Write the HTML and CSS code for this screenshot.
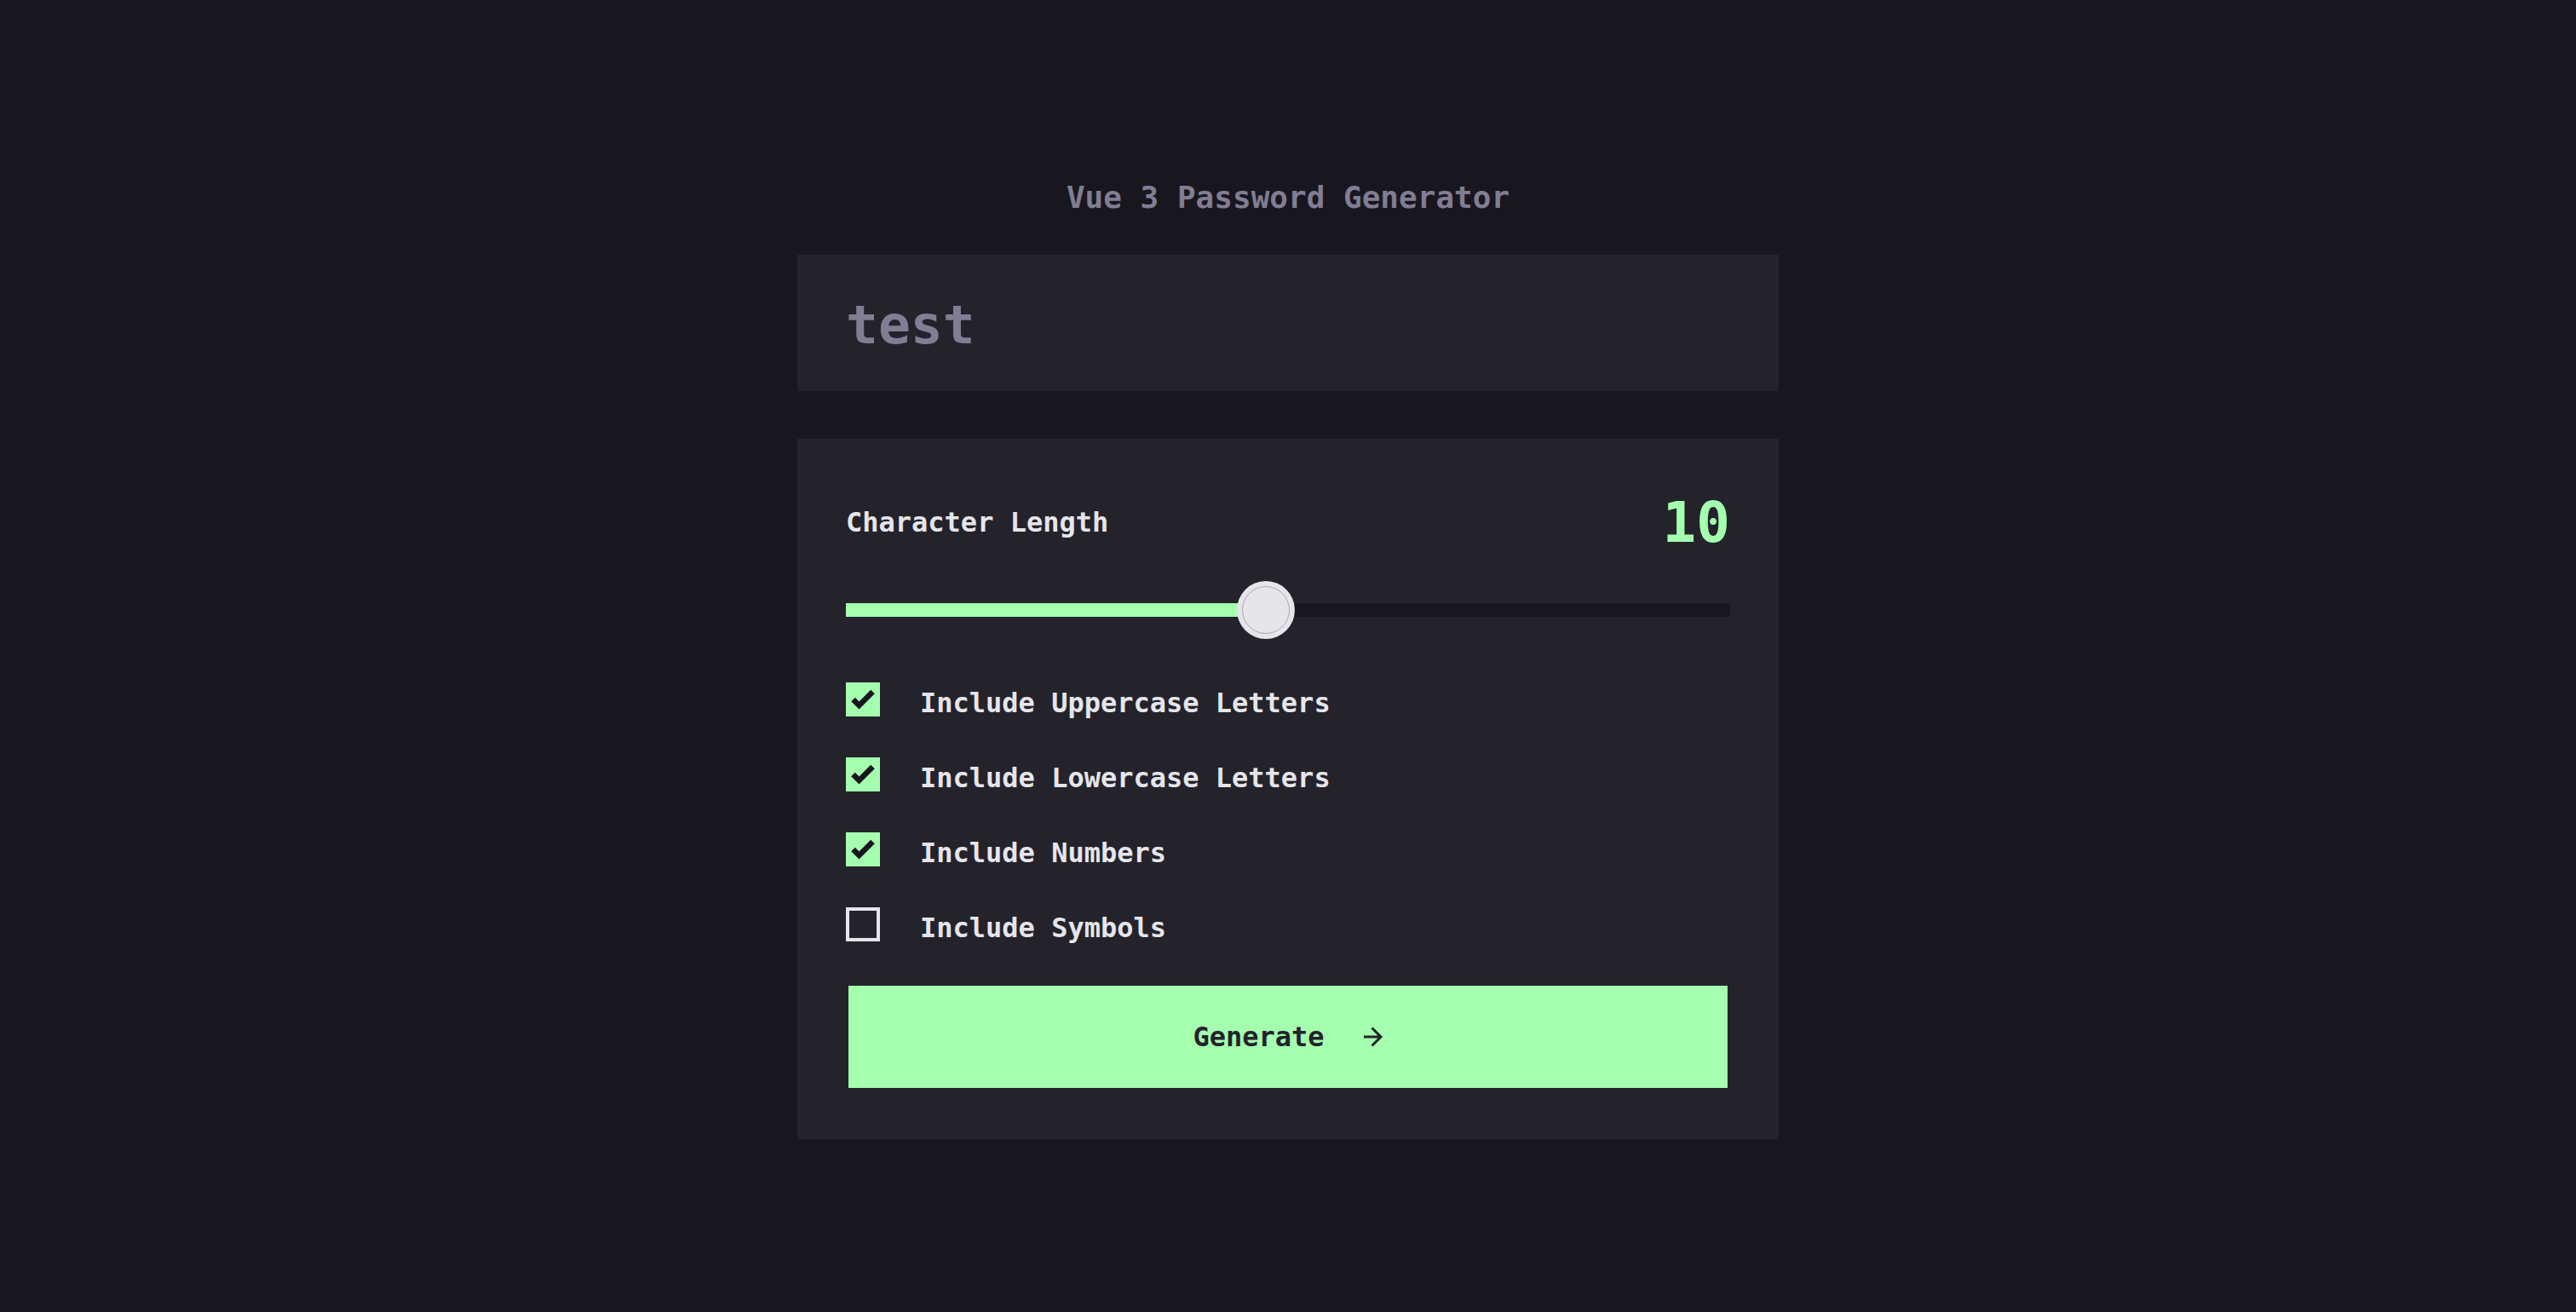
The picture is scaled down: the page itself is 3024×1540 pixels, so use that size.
FILE: index.html
```html
<!DOCTYPE html>
<html lang="en">
<head>
<meta charset="utf-8">
<title>Vue 3 Password Generator</title>
<link rel="stylesheet" href="styles.css">
</head>
<body>
<main class="app">
  <h1 class="title">Vue 3 Password Generator</h1>
  <div class="output">
    <span class="output-text">test</span>
  </div>
  <section class="panel">
    <div class="length-row">
      <span class="length-label">Character Length</span>
      <span class="length-value">10</span>
    </div>
    <div class="slider">
      <div class="slider-track">
        <div class="slider-fill" style="width: 47.54%"></div>
      </div>
      <div class="slider-thumb" style="left: 47.54%"><span class="thumb-ring"></span></div>
    </div>
    <ul class="options">
      <li class="option">
        <span class="box checked">
          <svg viewBox="0 0 40 40" width="40" height="40"><polyline points="8.5,20 15.5,27 31.5,11" fill="none" stroke="#18171F" stroke-width="6.5"/></svg>
        </span>
        <span class="option-label">Include Uppercase Letters</span>
      </li>
      <li class="option">
        <span class="box checked">
          <svg viewBox="0 0 40 40" width="40" height="40"><polyline points="8.5,20 15.5,27 31.5,11" fill="none" stroke="#18171F" stroke-width="6.5"/></svg>
        </span>
        <span class="option-label">Include Lowercase Letters</span>
      </li>
      <li class="option">
        <span class="box checked">
          <svg viewBox="0 0 40 40" width="40" height="40"><polyline points="8.5,20 15.5,27 31.5,11" fill="none" stroke="#18171F" stroke-width="6.5"/></svg>
        </span>
        <span class="option-label">Include Numbers</span>
      </li>
      <li class="option">
        <span class="box"></span>
        <span class="option-label">Include Symbols</span>
      </li>
    </ul>
    <button class="generate" type="button">
      <span>Generate</span>
      <svg class="arrow" viewBox="0 0 24 24" width="24" height="24"><path d="M1 12 H21.5 M10.5 1.5 L21 12 L10.5 22.5" fill="none" stroke="#24232C" stroke-width="3"/></svg>
    </button>
  </section>
</main>
</body>
</html>
```
FILE: styles.css
```css
* {
  box-sizing: border-box;
}

html, body {
  margin: 0;
  padding: 0;
}

body {
  background: #18171F;
  font-family: "DejaVu Sans Mono", "Liberation Mono", monospace;
  font-weight: bold;
  color: #E6E5EA;
  min-height: 1540px;
}

.app {
  width: 1152px;
  margin: 0 auto;
  padding-top: 211px;
  display: flex;
  flex-direction: column;
}

.title {
  margin: 0;
  font-size: 36px;
  line-height: 41px;
  font-weight: bold;
  text-align: center;
  color: #817D92;
}

.output {
  margin-top: 47px;
  height: 160px;
  background: #24232C;
  display: flex;
  align-items: center;
  padding: 0 57px;
}

.output-text {
  font-size: 63px;
  line-height: 1;
  color: #817D92;
  padding-top: 4px;
}

.panel {
  margin-top: 56px;
  background: #24232C;
  padding: 65px 57px 60px;
  display: flex;
  flex-direction: column;
}

.length-row {
  display: flex;
  justify-content: space-between;
  align-items: center;
  height: 66px;
}

.length-label {
  font-size: 32px;
  line-height: 1;
}

.length-value {
  font-size: 66px;
  line-height: 1;
  color: #A4FFAF;
  padding-top: 2px;
}

.slider {
  position: relative;
  margin-top: 36px;
  height: 68px;
  display: flex;
  align-items: center;
}

.slider-track {
  width: 100%;
  height: 16px;
  background: #18171F;
}

.slider-fill {
  height: 100%;
  background: #A4FFAF;
}

.slider-thumb {
  position: absolute;
  top: 0;
  width: 68px;
  height: 68px;
  margin-left: -34px;
  border-radius: 50%;
  background: #E6E5EA;
}

.thumb-ring {
  position: absolute;
  inset: 6px;
  border-radius: 50%;
  border: 1px solid #A9A8B0;
}

.options {
  list-style: none;
  margin: 51px 0 0;
  padding: 0;
  display: flex;
  flex-direction: column;
  gap: 48px;
}

.option {
  display: flex;
  align-items: center;
  gap: 47px;
  height: 40px;
}

.box {
  width: 40px;
  height: 40px;
  flex: none;
  border: 4px solid #E6E5EA;
  display: flex;
}

.box.checked {
  border: none;
  background: #A4FFAF;
}

.option-label {
  font-size: 32px;
  line-height: 1;
  padding-top: 7px;
}

.generate {
  margin: 52px 3px 0;
  height: 120px;
  border: none;
  background: #A4FFAF;
  color: #24232C;
  font-family: inherit;
  font-weight: bold;
  font-size: 32px;
  line-height: 1;
  display: flex;
  align-items: center;
  justify-content: center;
  gap: 45px;
  padding: 0;
}

.arrow {
  flex: none;
}
```
